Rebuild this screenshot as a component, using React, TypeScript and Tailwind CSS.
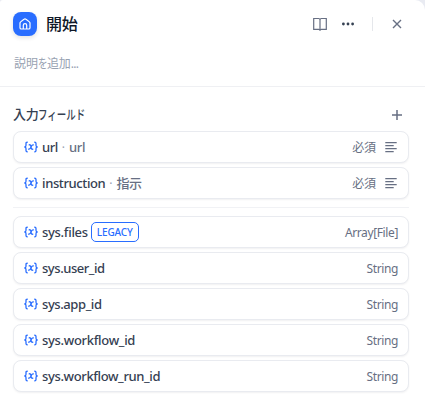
import React from 'react';

function VariableIcon() {
  return (
    <svg width="14" height="14" viewBox="0 0 14 14" fill="none" stroke="#296dff" strokeWidth="1.3" strokeLinecap="round" strokeLinejoin="round" className="shrink-0">
      <path d="M3.3 2.2C2.3 2.2 2 2.7 2 3.5v1.8C2 6.2 1.6 6.8.8 7c.8.2 1.2.8 1.2 1.7v1.8c0 .8.3 1.3 1.3 1.3" />
      <path d="M10.7 2.2c1 0 1.3.5 1.3 1.3v1.8c0 .9.4 1.5 1.2 1.7-.8.2-1.2.8-1.2 1.7v1.8c0 .8-.3 1.3-1.3 1.3" />
      <path d="M5.2 4.8c1.2-.3 1.5.4 1.8 2.2.3 1.8.6 2.5 1.8 2.2M9.3 4.9C8 4.6 7.5 6 7 7c-.6 1.2-1.1 2.4-2.4 2.1" />
    </svg>
  );
}

function AlignIcon() {
  return (
    <svg width="12" height="12" viewBox="0 0 12 12" stroke="#676f83" strokeWidth="1.2" className="shrink-0">
      <path d="M.3 1.6h11.4M.3 4.6h8.4M.3 7.6h11.4M.3 10.6h8.4" />
    </svg>
  );
}

function Card({ children }: { children: React.ReactNode }) {
  return (
    <div className="flex h-8 items-center justify-between rounded-lg border border-[#e9ebf0] bg-white px-[10px] shadow-[0_1px_2px_rgba(16,24,40,0.06)]">
      {children}
    </div>
  );
}

function InputField({ name, label, nameClass }: { name: string; label: string; nameClass: string }) {
  return (
    <Card>
      <div className="flex items-center whitespace-nowrap">
        <VariableIcon />
        <span className={`ml-1 pt-0.5 text-[13px] font-medium text-[#354052] ${nameClass}`}>{name}</span>
        <span className="w-[11px] pt-0.5 text-center text-[12px] text-[#98a2b2]">·</span>
        <span className="pt-0.5 text-[13px] font-medium tracking-[-0.35px] text-[#676f83]">{label}</span>
      </div>
      <div className="flex items-center gap-[9px] pr-[1px]">
        <span className="pt-0.5 text-[12px] tracking-[-0.1px] text-[#676f83]">必須</span>
        <AlignIcon />
      </div>
    </Card>
  );
}

function SystemField({ name, type, nameClass, legacy }: { name: string; type: string; nameClass: string; legacy?: boolean }) {
  return (
    <Card>
      <div className="flex items-center whitespace-nowrap">
        <VariableIcon />
        <span className={`ml-1 pt-0.5 text-[13px] font-medium text-[#354052] ${nameClass}`}>{name}</span>
        {legacy && (
          <span className="ml-[3px] flex h-5 w-12 items-center justify-center rounded-[5px] border border-[#296dff] pt-px text-[10px] font-medium tracking-[-0.15px] text-[#296dff]">
            LEGACY
          </span>
        )}
      </div>
      <span className="pt-0.5 text-[12px] tracking-[-0.38px] text-[#676f83]">{type}</span>
    </Card>
  );
}

export default function App() {
  return (
    <div className="h-[407px] w-[425px] overflow-hidden bg-[#e9ebf2] font-['Noto_Sans','Noto_Sans_CJK_JP',sans-serif]">
      <div className="h-full w-full rounded-tl-[3px] rounded-tr-[10px] bg-white">
        <header className="h-[87px] border-b border-[#eff0f3] pl-[13px] pr-[21px] pt-3">
          <div className="flex h-6 items-center">
            <div className="flex size-6 items-center justify-center rounded-lg bg-[#296dff] shadow-[0_2px_4px_rgba(16,24,40,0.12)]">
              <svg width="14" height="14" viewBox="0 0 14 14" fill="none" stroke="white" strokeWidth="1.2" strokeLinecap="round" strokeLinejoin="round">
                <path d="M5.3 12H3.3c-.8 0-1.3-.5-1.3-1.3V6.1c0-.5.2-.9.6-1.2L6 2.2c.6-.5 1.4-.5 2 0l3.4 2.7c.4.3.6.7.6 1.2v4.6c0 .8-.5 1.3-1.3 1.3H8.7M5.3 12V8.3c0-1 .7-1.7 1.7-1.7s1.7.7 1.7 1.7V12M5.3 12h3.4" />
              </svg>
            </div>
            <h1 className="ml-[9px] flex-1 text-[16px] font-medium leading-6 tracking-[-0.2px] text-[#101828]">開始</h1>
            <svg width="16" height="16" viewBox="0 0 16 16" fill="none" stroke="#676f83" strokeWidth="1.2" className="mr-3">
              <path d="M8 3.2v11.6M8 4c0-.9-.5-1.5-1.4-1.5H1.7v10.8h5c.8 0 1.3.4 1.3 1.1 0-.7.5-1.1 1.3-1.1h5V2.5H9.4C8.5 2.5 8 3.1 8 4Z" />
            </svg>
            <svg width="16" height="16" viewBox="0 0 16 16" fill="#354052">
              <circle cx="3.4" cy="8" r="1.4" />
              <circle cx="8" cy="8" r="1.4" />
              <circle cx="12.6" cy="8" r="1.4" />
            </svg>
            <div className="ml-4 mr-[17px] h-[14px] w-px bg-[#e5e7eb]" />
            <svg width="14" height="14" viewBox="0 0 14 14" fill="none" stroke="#676f83" strokeWidth="1.4">
              <path d="m3 3 8 8m0-8-8 8" />
            </svg>
          </div>
          <p className="mt-5 flex pl-px text-[12px] leading-4 text-[#98a2b2]">
            <span>説明</span>
            <span className="w-[9px] origin-left scale-x-[0.8]">を</span>
            <span className="tracking-[-0.2px]">追加</span>
            <span className="tracking-[-0.6px]">...</span>
          </p>
        </header>

        <main className="pl-[13px] pr-4 pt-[18px]">
          <div className="mb-[6px] flex h-5 items-center justify-between pr-[5px]">
            <h2 className="flex whitespace-nowrap text-[13px] font-medium text-[#354052]">
              <span className="tracking-[-0.3px]">入力</span>
              <span className="w-[47px] origin-left scale-x-[0.73]">フィールド</span>
            </h2>
            <svg width="14" height="14" viewBox="0 0 14 14" fill="none" stroke="#676f83" strokeWidth="1.5">
              <path d="M7 2v10M2 7h10" />
            </svg>
          </div>
          <div className="flex flex-col gap-1">
            <InputField name="url" label="url" nameClass="tracking-[-0.4px]" />
            <InputField name="instruction" label="指示" nameClass="tracking-[-0.38px]" />
          </div>
          <div className="my-2 h-px bg-[#f1f2f5]" />
          <div className="flex flex-col gap-1">
            <SystemField name="sys.files" type="Array[File]" nameClass="tracking-[-0.3px]" legacy />
            <SystemField name="sys.user_id" type="String" nameClass="tracking-[-0.45px]" />
            <SystemField name="sys.app_id" type="String" nameClass="tracking-[-0.42px]" />
            <SystemField name="sys.workflow_id" type="String" nameClass="tracking-[-0.31px]" />
            <SystemField name="sys.workflow_run_id" type="String" nameClass="tracking-[-0.37px]" />
          </div>
        </main>
      </div>
    </div>
  );
}
